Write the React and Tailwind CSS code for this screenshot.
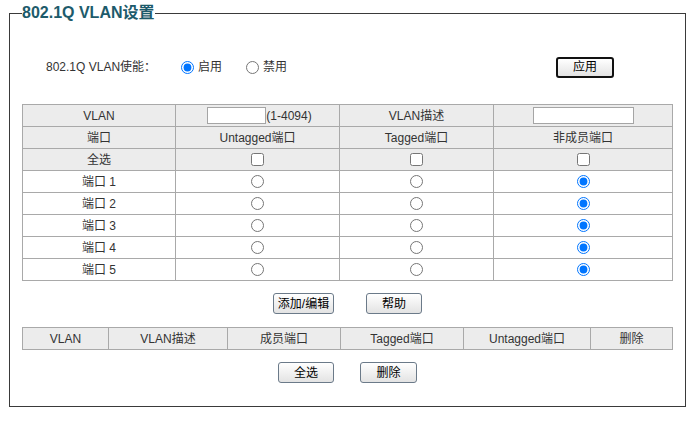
import React from "react";

const ports = [1, 2, 3, 4, 5];

function Btn({ children, w, focused }) {
  return (
    <button
      className={`h-[21px] ${w} rounded-[3px] bg-gradient-to-b from-white to-[#e3e3e3] text-[12px] leading-none text-black ${
        focused ? "border-2 border-[#111]" : "border border-[#6b7a89]"
      }`}
    >
      {children}
    </button>
  );
}

export default function App() {
  const cell = "border border-[#a9a9a9] h-[22px] p-0 text-center align-middle leading-[16px]";

  return (
    <div
      className="w-[692px] h-[422px] bg-white text-[#333] text-[12px]"
      style={{ fontFamily: '"Liberation Sans", "Noto Sans CJK SC", sans-serif' }}
    >
      <fieldset className="mt-[3px] mx-[9px] w-[676px] border border-[#3a3a3a] px-[12px] pb-[23px]">
        <legend className="ml-0 px-0 text-[16px] leading-[20px] font-bold text-[#1d5b6b]">
          802.1Q VLAN设置
        </legend>

        {/* enable row */}
        <div className="mt-[33px] flex h-[22px] items-center">
          <span className="ml-[24px] w-[135px]">802.1Q VLAN使能：</span>
          <label className="flex w-[65px] items-center gap-[4px]">
            <input type="radio" name="en" defaultChecked className="m-0 h-[13px] w-[13px]" />
            <span>启用</span>
          </label>
          <label className="flex items-center gap-[4px]">
            <input type="radio" name="en" className="m-0 h-[13px] w-[13px]" />
            <span>禁用</span>
          </label>
          <div className="ml-auto mr-[59px]">
            <Btn w="w-[58px]" focused>
              应用
            </Btn>
          </div>
        </div>

        {/* VLAN edit table */}
        <table className="mt-[26px] w-[650px] table-fixed border-collapse">
          <colgroup>
            <col className="w-[153px]" />
            <col className="w-[164px]" />
            <col className="w-[154px]" />
            <col className="w-[179px]" />
          </colgroup>
          <tbody>
            <tr className="bg-[#ececec]">
              <td className={cell}>VLAN</td>
              <td className={cell}>
                <div className="flex items-center justify-center pl-[4px]">
                  <input type="text" className="h-[17px] w-[59px] border border-[#a5a5a5] bg-white" />
                  <span>(1-4094)</span>
                </div>
              </td>
              <td className={cell}>VLAN描述</td>
              <td className={cell}>
                <div className="flex justify-center">
                  <input type="text" className="h-[17px] w-[101px] border border-[#a5a5a5] bg-white" />
                </div>
              </td>
            </tr>
            <tr className="bg-[#ececec]">
              <td className={cell}>端口</td>
              <td className={cell}>Untagged端口</td>
              <td className={cell}>Tagged端口</td>
              <td className={cell}>非成员端口</td>
            </tr>
            <tr className="bg-[#ececec]">
              <td className={cell}>全选</td>
              {[0, 1, 2].map((i) => (
                <td key={i} className={cell}>
                  <div className="flex justify-center">
                    <input type="checkbox" className="m-0 h-[13px] w-[13px]" />
                  </div>
                </td>
              ))}
            </tr>
            {ports.map((p) => (
              <tr key={p}>
                <td className={cell}>端口 {p}</td>
                {[0, 1, 2].map((i) => (
                  <td key={i} className={cell}>
                    <div className="flex justify-center">
                      <input
                        type="radio"
                        name={`port${p}`}
                        defaultChecked={i === 2}
                        className="m-0 h-[13px] w-[13px]"
                      />
                    </div>
                  </td>
                ))}
              </tr>
            ))}
          </tbody>
        </table>

        <div className="mt-[12px] flex justify-center gap-[32px]">
          <Btn w="w-[61px]">添加/编辑</Btn>
          <Btn w="w-[56px]">帮助</Btn>
        </div>

        {/* VLAN list */}
        <table className="mt-[13px] w-[650px] table-fixed border-collapse">
          <colgroup>
            <col className="w-[86px]" />
            <col className="w-[119px]" />
            <col className="w-[113px]" />
            <col className="w-[123px]" />
            <col className="w-[127px]" />
            <col className="w-[82px]" />
          </colgroup>
          <tbody>
            <tr className="bg-[#ececec]">
              <td className={cell}>VLAN</td>
              <td className={cell}>VLAN描述</td>
              <td className={cell}>成员端口</td>
              <td className={cell}>Tagged端口</td>
              <td className={cell}>Untagged端口</td>
              <td className={cell}>删除</td>
            </tr>
          </tbody>
        </table>

        <div className="mt-[12px] flex justify-center gap-[26px]">
          <Btn w="w-[56px]">全选</Btn>
          <Btn w="w-[57px]">删除</Btn>
        </div>
      </fieldset>
    </div>
  );
}
